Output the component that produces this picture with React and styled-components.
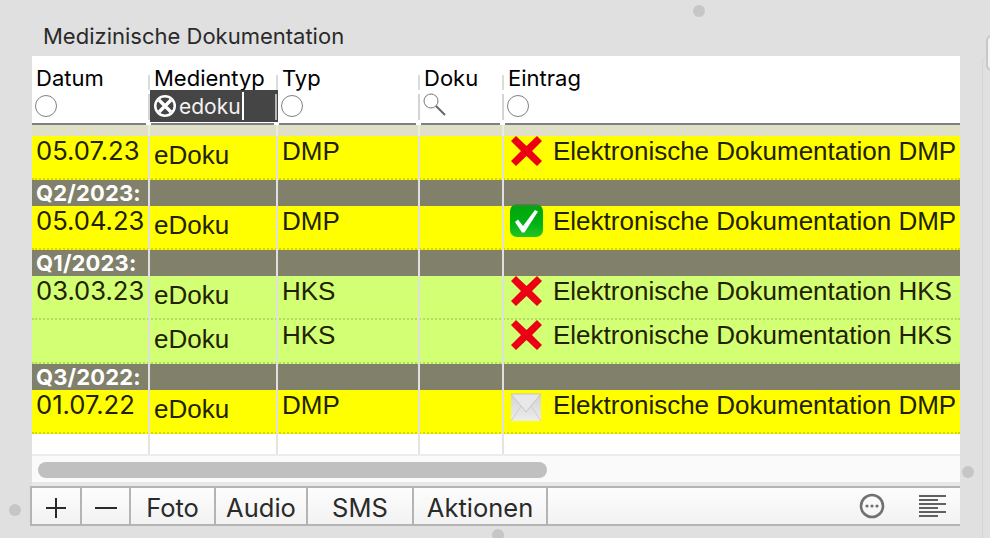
import React from 'react';
import styled, { createGlobalStyle } from 'styled-components';

const GRID = '118px 128px 142px 84px 1fr';

const GlobalStyle = createGlobalStyle`
  html, body { margin: 0; padding: 0; background: #e0e0e0; }
`;

const Page = styled.div`
  position: relative;
  width: 990px;
  height: 538px;
  overflow: hidden;
  background: #e0e0e0;
  box-sizing: border-box;
  padding: 22px 30px 0 32px;
  font-family: "Liberation Sans", Arial, sans-serif;
`;

const Title = styled.div`
  font-family: Inter, "Liberation Sans", sans-serif;
  font-size: 22px;
  line-height: 28px;
  height: 34px;
  margin-left: 11px;
  color: #2a2a2a;
  white-space: nowrap;
`;

const Panel = styled.div`
  width: 928px;
  background: #fff;
`;

const HeaderRow = styled.div`
  display: grid;
  grid-template-columns: ${GRID};
  height: 69px;
`;

const HeaderCell = styled.div`
  position: relative;
  box-sizing: border-box;
  padding: 9px 0 0 4px;
  font-family: Inter, "Liberation Sans", sans-serif;
  font-size: 22px;
  line-height: 27px;
  color: #000;
  white-space: nowrap;

  &::after {
    content: '';
    position: absolute;
    left: ${(p) => (p.$first ? 0 : 1)}px;
    right: ${(p) => (p.$last ? 0 : 4)}px;
    bottom: 0;
    height: 2px;
    background: #808080;
  }
`;

const HeaderDivider = styled.span`
  position: absolute;
  right: 0;
  top: 19px;
  height: 45px;
  width: 2px;
  background: linear-gradient(#dcdcdc 0 15px, #fff 15px 19px, #d4d4d4 19px);
`;

const FilterCircle = styled.span`
  display: block;
  width: 22px;
  height: 22px;
  margin: 3px 0 0 -1px;
  border: 1px solid #808080;
  border-radius: 50%;
  box-sizing: border-box;
`;

const SearchGlass = styled.svg`
  display: block;
  width: 25px;
  height: 25px;
  margin: 1px 0 0 -2px;
`;

const SearchField = styled.div`
  position: absolute;
  z-index: 1;
  left: 0;
  right: 0;
  top: 34px;
  height: 32px;
  background: #454545;
  color: #f2f2f2;
  display: flex;
  align-items: center;
  padding-left: 3px;
  font-size: 21px;
`;

const SearchText = styled.span`
  margin-left: 2px;
`;

const Caret = styled.span`
  width: 2px;
  height: 28px;
  background: #fff;
  margin-left: 1px;
`;

const FieldEdge = styled.span`
  position: absolute;
  right: 1px;
  top: 4px;
  width: 2px;
  height: 26px;
  background: #b8b8b8;
`;

const Gutter = styled.div`
  display: grid;
  grid-template-columns: ${GRID};
  height: 11px;
  background: #e0e0c8;
`;

const GutterCell = styled.div`
  border-right: 2px solid #ececdc;
  &:last-child { border-right: none; }
`;

const Row = styled.div`
  display: grid;
  grid-template-columns: ${GRID};
  height: ${(p) => p.$h}px;
  box-sizing: border-box;
  background: ${(p) => p.$bg};
  border-bottom: 2px dotted ${(p) => p.$dot};
  color: #222200;
  font-size: 26px;
  white-space: nowrap;
`;

const Cell = styled.div`
  box-sizing: border-box;
  border-right: 2px solid #e0e0e0;
  margin-bottom: -2px;
  padding: ${(p) => p.$top}px 0 0 4px;
  line-height: 30px;
  &:last-child { border-right: none; }
`;

const DateCell = styled(Cell)`
  font-family: Inter, "Liberation Sans", sans-serif;
  font-size: 25.6px;
`;

const EntryCell = styled(Cell)`
  display: flex;
  align-items: flex-start;
  gap: 10px;
  padding-left: 6px;
  padding-top: 0;
`;

const EntryIcon = styled.svg`
  width: 33px;
  height: 33px;
  margin-top: -2px;
  flex: none;
`;

const GroupRow = styled.div`
  display: grid;
  grid-template-columns: ${GRID};
  height: 26px;
  background: #80806b;
  color: #fff;
  font-family: Inter, "Liberation Sans", sans-serif;
  font-weight: 700;
  font-size: 22px;
  letter-spacing: 0.15px;
  line-height: 26px;
  white-space: nowrap;
`;

const GroupCell = styled.div`
  box-sizing: border-box;
  border-right: 2px solid #e0e0e0;
  padding-left: 4px;
  &:last-child { border-right: none; }
`;

const EmptyRow = styled.div`
  display: grid;
  grid-template-columns: ${GRID};
  height: 20px;
  border-bottom: 2px solid #ececec;
`;

const EmptyCell = styled.div`
  border-right: 2px solid #e4e4e4;
  &:last-child { border-right: none; }
`;

const ScrollTrack = styled.div`
  height: 30px;
  box-sizing: border-box;
  padding: 6px;
  background: #fafafa;
  border-bottom: 4px solid #e8e8e8;
`;

const ScrollThumb = styled.div`
  width: 509px;
  height: 16px;
  border-radius: 8px;
  background: #c0c0c0;
`;

const Toolbar = styled.div`
  display: flex;
  align-items: stretch;
  height: 40px;
  margin-left: -2px;
  width: 930px;
  box-sizing: border-box;
  border-top: 2px solid #b4b4b4;
  border-bottom: 2px solid #b4b4b4;
  border-left: 2px solid #b4b4b4;
  background: linear-gradient(#fdfdfd, #f2f2f2);
`;

const ToolButton = styled.div`
  width: ${(p) => p.$w}px;
  box-sizing: border-box;
  border-right: 2px solid #b4b4b4;
  display: flex;
  align-items: center;
  justify-content: center;
  font-family: Inter, "Liberation Sans", sans-serif;
  font-size: 25.5px;
  color: #2a2a2a;
  padding-top: 3px;
`;

const ToolIcons = styled.div`
  margin-left: auto;
  display: flex;
  align-items: center;
  gap: 33px;
  padding-right: 14px;
`;

const Dot = styled.span`
  position: absolute;
  left: ${(p) => p.$x - 6}px;
  top: ${(p) => p.$y - 6}px;
  width: 12px;
  height: 12px;
  border-radius: 50%;
  background: #c6c6c6;
`;

const WindowEdge = styled.span`
  position: absolute;
  left: 982px;
  top: 55px;
  width: 8px;
  height: 483px;
  border-left: 1px solid #d4d4d4;
  border-top-left-radius: 8px;
`;

const WindowTab = styled.span`
  position: absolute;
  left: 986px;
  top: 35px;
  width: 12px;
  height: 36px;
  box-sizing: border-box;
  border: 2px solid #c8c8c8;
  border-radius: 6px;
  background: #f4f4f4;
`;

const CrossIcon = () => (
  <EntryIcon viewBox="0 0 33 33">
    <path d="M6 2 L16.5 12 L27 2 L32 7 L22 17 L32 27 L27 32 L16.5 22 L6 32 L1 27 L11 17 L1 7 Z" fill="#ec0014" />
  </EntryIcon>
);

const CheckIcon = () => (
  <EntryIcon viewBox="0 0 33 33">
    <defs>
      <linearGradient id="checkFill" x1="0" y1="0" x2="0" y2="1">
        <stop offset="0" stopColor="#5c7a4a" />
        <stop offset="0.1" stopColor="#00a80c" />
        <stop offset="0.55" stopColor="#00b010" />
        <stop offset="1" stopColor="#22c428" />
      </linearGradient>
    </defs>
    <rect width="33" height="33" rx="7" fill="url(#checkFill)" />
    <path d="M5 18 L8 15.5 L13 22 L25 6 L28 7.5 L14.5 28.5 L12 28.5 Z" fill="#fff" />
  </EntryIcon>
);

const MailIcon = () => (
  <EntryIcon viewBox="0 0 33 33">
    <defs>
      <linearGradient id="mailFill" x1="0" y1="0" x2="0" y2="1">
        <stop offset="0" stopColor="#d4d4d4" />
        <stop offset="1" stopColor="#ececec" />
      </linearGradient>
    </defs>
    <rect x="1" y="6" width="30" height="27" fill="url(#mailFill)" />
    <path d="M1 6 L16 24 L31 6 Z" fill="#e8e8e8" stroke="#c4c4c4" strokeWidth="1" />
    <path d="M1 33 L11 18 M31 33 L21 18" fill="none" stroke="#cfcfcf" strokeWidth="1" />
  </EntryIcon>
);

const ICONS = { cross: CrossIcon, check: CheckIcon, mail: MailIcon };

const YELLOW = { bg: '#ffff00', dot: '#d8d800' };
const GREEN = { bg: '#d2ff73', dot: '#b4dc60' };

const rows = [
  { h: 44, tone: YELLOW, date: '05.07.23', typ: 'DMP', icon: 'cross' },
  { group: 'Q2/2023:' },
  { h: 44, tone: YELLOW, date: '05.04.23', typ: 'DMP', icon: 'check' },
  { group: 'Q1/2023:' },
  { h: 44, tone: GREEN, date: '03.03.23', typ: 'HKS', icon: 'cross' },
  { h: 44, tone: GREEN, date: '', typ: 'HKS', icon: 'cross' },
  { group: 'Q3/2022:' },
  { h: 44, tone: YELLOW, date: '01.07.22', typ: 'DMP', icon: 'mail' },
];

const columns = ['Datum', 'Medientyp', 'Typ', 'Doku', 'Eintrag'];

const App = () => (
  <Page>
    <GlobalStyle />
    <Title>Medizinische Dokumentation</Title>
    <Panel>
      <HeaderRow>
        {columns.map((label, i) => (
          <HeaderCell key={label} $first={i === 0} $last={i === 4}>
            {label}
            {i === 1 ? (
              <SearchField>
                <svg width="24" height="24" viewBox="0 0 24 24">
                  <circle cx="12" cy="12" r="11" fill="#fff" />
                  <circle cx="12" cy="12" r="8.5" fill="#454545" />
                  <path d="M6 6 L18 18 M18 6 L6 18" stroke="#fff" strokeWidth="3.4" />
                </svg>
                <SearchText>edoku</SearchText>
                <Caret />
                <FieldEdge />
              </SearchField>
            ) : i === 3 ? (
              <SearchGlass viewBox="0 0 25 25">
                <circle cx="9" cy="8" r="7" fill="none" stroke="#777" strokeWidth="1" />
                <path d="M14 13 L23 22" stroke="#666" strokeWidth="2" />
              </SearchGlass>
            ) : (
              <FilterCircle />
            )}
            {i < 4 && <HeaderDivider />}
          </HeaderCell>
        ))}
      </HeaderRow>
      <Gutter>
        {columns.map((label) => (
          <GutterCell key={label} />
        ))}
      </Gutter>
      {rows.map((row, i) => {
        if (row.group) {
          return (
            <GroupRow key={i}>
              <GroupCell>{row.group}</GroupCell>
              <GroupCell />
              <GroupCell />
              <GroupCell />
              <GroupCell />
            </GroupRow>
          );
        }
        const Icon = ICONS[row.icon];
        return (
          <Row key={i} $h={row.h} $bg={row.tone.bg} $dot={row.tone.dot}>
            <DateCell $top={0}>{row.date}</DateCell>
            <Cell $top={4}>eDoku</Cell>
            <Cell $top={0}>{row.typ}</Cell>
            <Cell $top={0} />
            <EntryCell>
              <Icon />
              <span>Elektronische Dokumentation {row.typ}</span>
            </EntryCell>
          </Row>
        );
      })}
      <EmptyRow>
        {columns.map((label) => (
          <EmptyCell key={label} />
        ))}
      </EmptyRow>
      <ScrollTrack>
        <ScrollThumb />
      </ScrollTrack>
      <Toolbar>
        <ToolButton $w={50}>
          <svg width="24" height="24" viewBox="0 0 24 24"><path d="M12 2 V22 M2 12 H22" stroke="#2a2a2a" strokeWidth="2" /></svg>
        </ToolButton>
        <ToolButton $w={49}>
          <svg width="24" height="24" viewBox="0 0 24 24"><path d="M1 12 H23" stroke="#2a2a2a" strokeWidth="2" /></svg>
        </ToolButton>
        <ToolButton $w={85}>Foto</ToolButton>
        <ToolButton $w={92}>Audio</ToolButton>
        <ToolButton $w={106}>SMS</ToolButton>
        <ToolButton $w={134}>Aktionen</ToolButton>
        <ToolIcons>
          <svg width="26" height="26" viewBox="0 0 26 26">
            <circle cx="13" cy="13" r="11" fill="none" stroke="#707070" strokeWidth="2.6" />
            <circle cx="8" cy="13" r="1.6" fill="#707070" />
            <circle cx="13" cy="13" r="1.6" fill="#707070" />
            <circle cx="18" cy="13" r="1.6" fill="#707070" />
          </svg>
          <svg width="28" height="24" viewBox="0 0 28 24">
            {[28, 20, 28, 20, 28, 20].map((w, i) => (
              <rect key={i} x="1" y={1 + i * 4} width={w - 1} height="2" fill="#606060" />
            ))}
          </svg>
        </ToolIcons>
      </Toolbar>
    </Panel>
    <Dot $x={699} $y={11} />
    <Dot $x={968} $y={472} />
    <Dot $x={15} $y={510} />
    <Dot $x={498} $y={535} />
    <WindowEdge />
    <WindowTab />
  </Page>
);

export default App;
